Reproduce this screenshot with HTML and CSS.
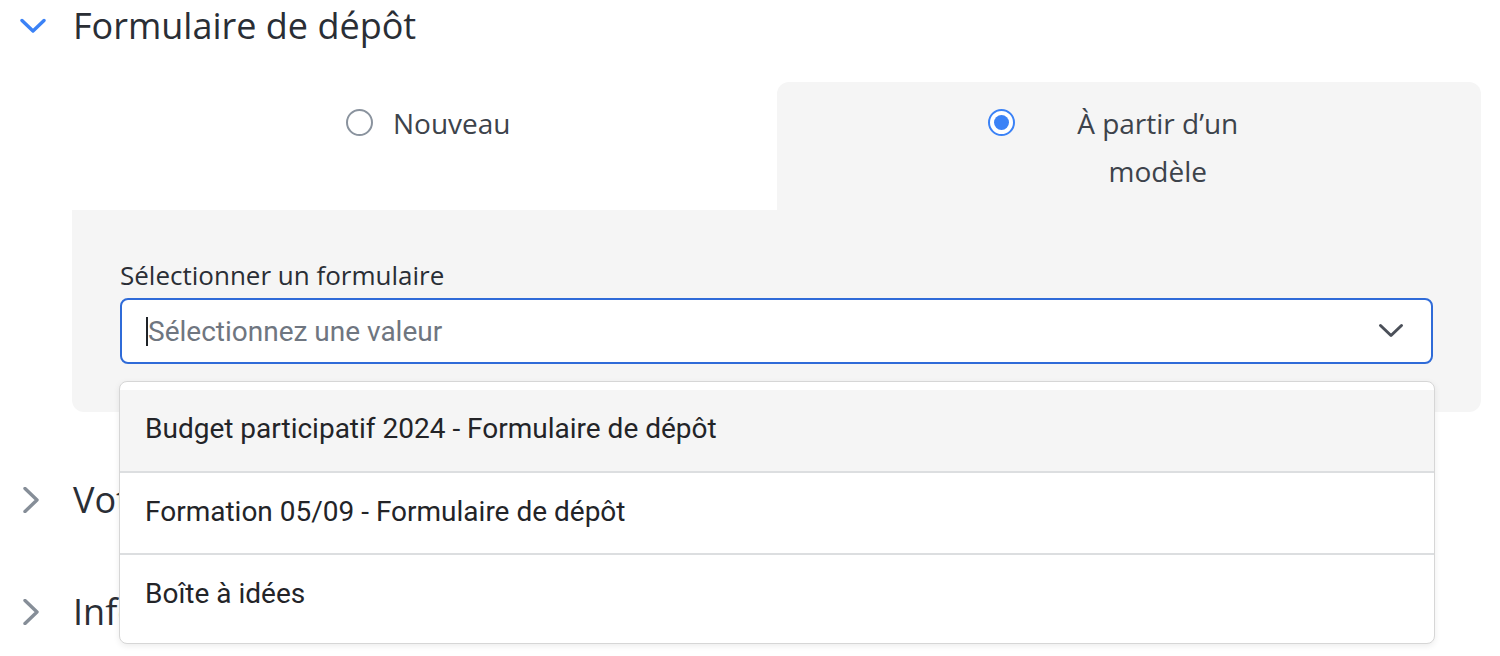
FILE: index.html
```html
<!DOCTYPE html>
<html lang="fr">
<head>
<meta charset="utf-8">
<title>Formulaire de dépôt</title>
<link rel="stylesheet" href="styles.css">
</head>
<body>
<div class="page">
  <section class="acc">
    <div class="acc-head">
      <svg class="chev chev-down" width="26" height="16" viewBox="0 0 26 16"><path d="M2 2.5 L13 13 L24 2.5" fill="none" stroke="#3b82f6" stroke-width="3.4" stroke-linecap="round" stroke-linejoin="round"/></svg>
      <h2 class="acc-title">Formulaire de dépôt</h2>
    </div>
    <div class="acc-body">
      <div class="tabs">
        <label class="tab tab-new">
          <span class="radio"></span>
          <span class="tab-label">Nouveau</span>
        </label>
        <label class="tab tab-active">
          <span class="radio radio-on"><span class="dot"></span></span>
          <span class="tab-label tab-label-wide">À partir d’un modèle</span>
        </label>
      </div>
      <div class="panel">
        <div class="field-label">Sélectionner un formulaire</div>
        <div class="select-wrap">
          <div class="select">
            <span class="caret"></span>
            <span class="placeholder">Sélectionnez une valeur</span>
            <svg class="select-chev" width="26" height="16" viewBox="0 0 26 16"><path d="M2.5 2.5 L13 12.5 L23.5 2.5" fill="none" stroke="#4b5059" stroke-width="3" stroke-linecap="round" stroke-linejoin="round"/></svg>
          </div>
          <ul class="menu">
            <li class="opt opt-hover">Budget participatif 2024 - Formulaire de dépôt</li>
            <li class="opt">Formation 05/09 - Formulaire de dépôt</li>
            <li class="opt">Boîte à idées</li>
          </ul>
        </div>
      </div>
    </div>
  </section>
  <section class="acc acc-closed">
    <div class="acc-head">
      <svg class="chev chev-right" width="26" height="26" viewBox="0 0 26 26"><path d="M5 1.5 L17 13 L5 24.5" fill="none" stroke="#868e98" stroke-width="3.4" stroke-linecap="round" stroke-linejoin="round"/></svg>
      <h2 class="acc-title">Vote</h2>
    </div>
  </section>
  <section class="acc acc-closed">
    <div class="acc-head">
      <svg class="chev chev-right" width="26" height="26" viewBox="0 0 26 26"><path d="M5 1.5 L17 13 L5 24.5" fill="none" stroke="#868e98" stroke-width="3.4" stroke-linecap="round" stroke-linejoin="round"/></svg>
      <h2 class="acc-title">Informations</h2>
    </div>
  </section>
</div>
</body>
</html>
```
FILE: styles.css
```css
* { box-sizing: border-box; }
html, body { margin: 0; padding: 0; background: #ffffff; }
body {
  font-family: "Open Sans", "Noto Sans", sans-serif;
  color: #2a2e35;
  width: 1500px;
  height: 656px;
  overflow: hidden;
}
.page { padding: 0 19px 0 20px; }

.acc-head {
  display: flex;
  align-items: center;
  height: 52px;
  gap: 27px;
}
.chev { flex: none; display: block; }
.acc-title {
  margin: 0;
  font-size: 36px;
  font-weight: 400;
  line-height: 52px;
  color: #2a2e35;
}

.acc-body { margin: 30px 0 0 52px; }
.tabs {
  display: grid;
  grid-template-columns: 1fr 1fr;
}
.tab {
  display: flex;
  justify-content: center;
  align-items: flex-start;
  gap: 20px;
  padding: 17px 0 15px;
  background: #ffffff;
}
.tab-new { padding-left: 8px; }
.tab-active {
  background: #f5f5f5;
  border-radius: 12px 12px 0 0;
  padding-left: 11px;
}
.radio {
  flex: none;
  width: 27px;
  height: 27px;
  margin-top: 10px;
  border: 2px solid #8a939e;
  border-radius: 50%;
  display: flex;
  align-items: center;
  justify-content: center;
  background: #fff;
}
.radio-on { border: 2.5px solid #3b82f6; }
.dot { width: 15px; height: 15px; border-radius: 50%; background: #3b82f6; }
.tab-label {
  font-size: 28px;
  line-height: 48px;
  color: #3d434b;
}
.tab-label-wide { width: 246px; text-align: center; }

.panel {
  background: #f5f5f5;
  border-radius: 0 0 12px 12px;
  padding: 48px;
}
.field-label {
  font-size: 26px;
  line-height: 34px;
  margin-bottom: 6px;
  color: #2a2e35;
}
.select-wrap { position: relative; }
.select {
  height: 66px;
  border: 2px solid #2f6bd8;
  border-radius: 8px;
  background: #ffffff;
  display: flex;
  align-items: center;
  padding: 0 27px 0 24px;
}
.caret {
  width: 2px;
  height: 29px;
  background: #1f2328;
  flex: none;
}
.placeholder {
  flex: 1;
  font-family: Roboto, "Liberation Sans", sans-serif;
  font-size: 28px;
  color: #6f7680;
}
.select-chev { flex: none; }

.menu {
  position: absolute;
  top: 83px;
  left: -1px;
  right: -2px;
  margin: 0;
  padding: 8px 0;
  list-style: none;
  background: #ffffff;
  border: 1px solid #d6d6d6;
  border-radius: 8px;
  box-shadow: 0 2px 6px rgba(0,0,0,0.08);
  z-index: 5;
}
.opt {
  height: 82px;
  display: flex;
  align-items: center;
  padding: 0 25px 4px;
  font-family: Roboto, "Liberation Sans", sans-serif;
  font-size: 28px;
  color: #232428;
  border-top: 2px solid #dcdee0;
}
.opt:first-child { border-top: none; height: 81px; }
.opt-hover { background: #f5f5f5; }

.acc-closed { margin-top: 62px; }
.acc-closed + .acc-closed { margin-top: 60px; }
```
